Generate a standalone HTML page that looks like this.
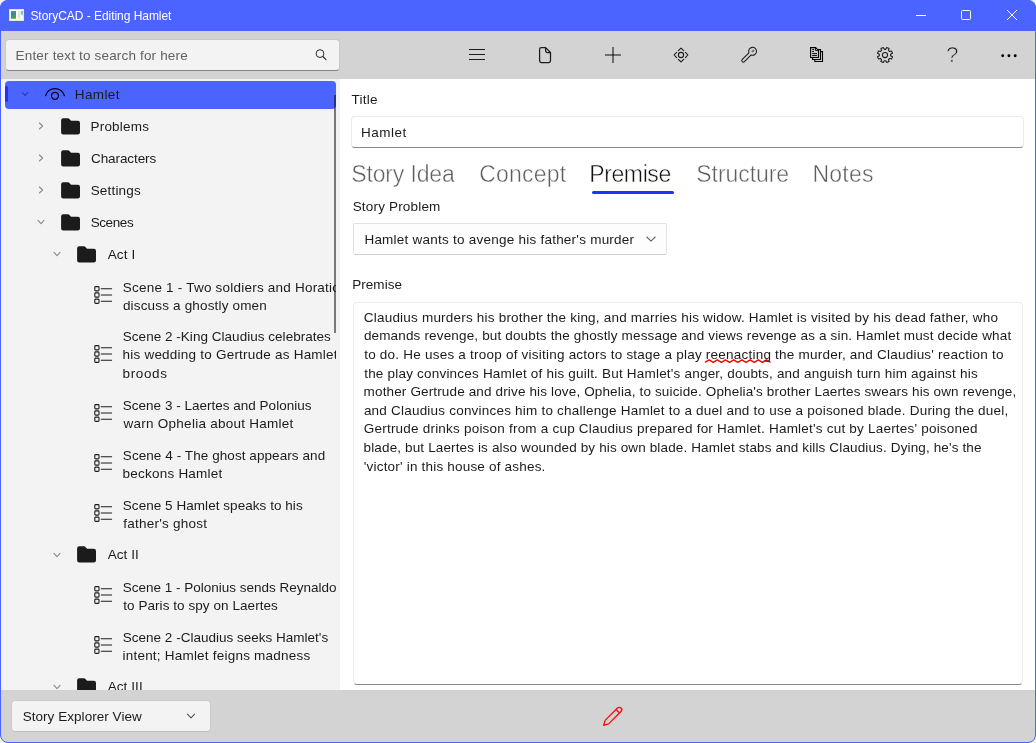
<!DOCTYPE html>
<html lang="en"><head><meta charset="utf-8"><title>StoryCAD - Editing Hamlet</title>
<style>
html,body{margin:0;padding:0}
body{width:1036px;height:743px;overflow:hidden;position:relative;background:#f0f0f0;font-family:"Liberation Sans",sans-serif;}
.a{position:absolute;display:block}
.t{position:absolute;white-space:nowrap;line-height:1;font-family:"Liberation Sans",sans-serif}
.tab{-webkit-text-stroke:0.45px #fff}
.q{-webkit-text-stroke:0.7px #d3d3d3}
#win{position:absolute;left:0;top:0;width:1036px;height:743px;border-radius:8px;overflow:hidden;background:#fff;will-change:transform}
#frame{position:absolute;left:0;top:0;width:1034px;height:741px;border:1px solid #4b64ff;border-radius:8px;pointer-events:none}
#titlebar{left:0;top:0;width:1036px;height:31px;background:#4b64ff}
#toolbar{left:0;top:31px;width:1036px;height:48px;background:#d3d3d3}
#tree{left:0;top:79px;width:340px;height:611px;background:#f3f3f3}
#treeclip{left:0;top:79px;width:336px;height:611px;overflow:hidden}
#treeclip > .in{position:absolute;left:0;top:-79px;width:336px;height:800px}
#bottombar{left:0;top:690px;width:1036px;height:53px;background:#d3d3d3}
.sel{background:#4b64ff;border-radius:4px}
.box{position:absolute;box-sizing:border-box;border-radius:4px}
</style></head><body>
<div id="win">
<div id="titlebar" class="a"></div>
<div id="toolbar" class="a"></div>
<div id="tree" class="a"></div>
<div id="bottombar" class="a"></div>

<!-- title bar -->
<svg class="a" style="left:9px;top:9px" width="16" height="13" viewBox="0 0 16 13"><defs><linearGradient id="g1" x1="0" y1="0" x2="1" y2="1"><stop offset="0" stop-color="#4d7fb0"/><stop offset="0.5" stop-color="#3d8f86"/><stop offset="1" stop-color="#45ad4e"/></linearGradient><linearGradient id="g2" x1="0" y1="0" x2="0" y2="1"><stop offset="0" stop-color="#7f9fcf"/><stop offset="0.75" stop-color="#9fdc90"/><stop offset="1" stop-color="#eef6ea"/></linearGradient></defs><rect x="0" y="0" width="15" height="12" fill="#fbfbf8"/><rect x="0.5" y="0.5" width="14" height="11" fill="none" stroke="#e4e3dc"/><rect x="2" y="2.1" width="5" height="7.6" fill="url(#g1)"/><rect x="8.9" y="2.1" width="2.4" height="7.6" fill="#e2e2e2"/><rect x="11.9" y="2.1" width="2.1" height="4.6" fill="url(#g2)"/></svg>
<div class="a" style="left:916px;top:15px;width:10px;height:1px;background:#fff"></div>
<div class="a" style="left:961px;top:10px;width:8px;height:8px;border:1px solid #fff;border-radius:1.5px"></div>
<svg class="a" style="left:1006px;top:9px" width="12" height="12" viewBox="1006 9 12 12"><path d="M1007.2 10.2 L1016.8 19.8 M1016.8 10.2 L1007.2 19.8" stroke="#fff" stroke-width="1" stroke-linecap="round"/></svg>

<!-- toolbar -->
<div class="box" style="left:5px;top:39px;width:335px;height:32px;background:#f3f3f3;border:1px solid #c8c8c8;border-bottom-color:#868686"></div>
<svg class="a" style="left:313px;top:47px" width="16" height="16" viewBox="313 47 16 16"><circle cx="320" cy="53.6" r="3.9" fill="none" stroke="#2a2a2a" stroke-width="1"/><path d="M322.9 56.5 L326 59.6" stroke="#2a2a2a" stroke-width="1.1" stroke-linecap="round"/></svg>
<div class="a" style="left:469px;top:49px;width:16px;height:1px;background:#1b1b1b;box-shadow:0 5px 0 #1b1b1b,0 10px 0 #1b1b1b"></div><svg class="a" style="left:537px;top:45px" width="16" height="20" viewBox="537 45 16 20"><path fill="none" stroke="#1b1b1b" stroke-width="1.25" stroke-linejoin="round" d="M541.3 47.6 H545.6 L550.5 52.5 V60.8 A1.7 1.7 0 0 1 548.8 62.5 H541.3 A1.7 1.7 0 0 1 539.6 60.8 V49.3 A1.7 1.7 0 0 1 541.3 47.6 Z M545.6 47.6 V50.8 A1.7 1.7 0 0 0 547.3 52.5 H550.5"/></svg><div class="a" style="left:605px;top:54px;width:16px;height:2px;background:rgba(0,0,0,.48)"></div><div class="a" style="left:612px;top:47px;width:2px;height:16px;background:rgba(0,0,0,.48)"></div><svg class="a" style="left:672px;top:46px" width="18" height="18" viewBox="672 46 18 18"><g fill="none" stroke="#1b1b1b" stroke-width="1.1" stroke-linecap="round" stroke-linejoin="round"><circle cx="681" cy="55" r="2.6"/><path d="M678.3 50.6 L681 48.1 L683.7 50.6 M678.3 59.4 L681 61.9 L683.7 59.4 M676.6 52.3 L674.1 55 L676.6 57.7 M685.4 52.3 L687.9 55 L685.4 57.7"/></g></svg><svg class="a" style="left:739px;top:45px" width="20" height="20" viewBox="739 45 20 20"><path d="M751.9 52.0 L753.9 50.0" fill="none" stroke="rgba(0,0,0,.42)" stroke-width="2.2"/><path fill="none" stroke="#1b1b1b" stroke-width="1.05" stroke-linejoin="round" stroke-linecap="round" d="M748.93 52.77 A3.95 3.95 0 1 1 751.13 54.97 L744.45 61.65 A1.55 1.55 0 0 1 742.25 59.45 Z"/></svg><svg class="a" style="left:808px;top:45px" width="18" height="20" viewBox="808 45 18 20"><g fill="none" stroke="#000" stroke-width="1.1" stroke-linejoin="miter"><path d="M810.6 47.6 H815.6 L818.5 50.4 V57.5 H810.6 Z"/><path d="M815.4 47.8 V50.6 H818.4" stroke-width="0.9"/><path d="M812.6 57.6 V59.5 H820.5 V49.6 H818"/><path d="M814.8 59.6 V61.5 H822.5 V51.6 H820.6"/><path d="M812.2 49.6 H814 M812.2 51.6 H814 M812.2 53.6 H817 M812.2 55.6 H817" stroke-width="1"/></g></svg><svg class="a" style="left:875px;top:45px" width="20" height="20" viewBox="875 45 20 20"><g fill="none" stroke="#1b1b1b" stroke-width="1.05" stroke-linejoin="round"><path d="M890.65 55.74 L892.50 56.73 L891.53 59.08 L889.52 58.47 L888.47 59.52 L889.08 61.53 L886.73 62.50 L885.74 60.65 L884.26 60.65 L883.27 62.50 L880.92 61.53 L881.53 59.52 L880.48 58.47 L878.47 59.08 L877.50 56.73 L879.35 55.74 L879.35 54.26 L877.50 53.27 L878.47 50.92 L880.48 51.53 L881.53 50.48 L880.92 48.47 L883.27 47.50 L884.26 49.35 L885.74 49.35 L886.73 47.50 L889.08 48.47 L888.47 50.48 L889.52 51.53 L891.53 50.92 L892.50 53.27 L890.65 54.26 Z"/><circle cx="885" cy="55" r="2.6"/></g></svg><div class="t q" style="left:946.1px;top:43.9px;font-size:22.6px;color:#1b1b1b">?</div><svg class="a" style="left:1000px;top:52px" width="18" height="8" viewBox="1000 52 18 8"><circle cx="1002.7" cy="55.7" r="1.45"/><circle cx="1008.9" cy="55.7" r="1.45"/><circle cx="1015.2" cy="55.7" r="1.45"/></svg>

<!-- tree -->
<div id="treeclip" class="a"><div class="in">
<div class="a sel" style="left:5px;top:81px;width:331px;height:28px"></div><div class="a" style="left:5px;top:86px;width:3px;height:16px;border-radius:2px;background:#1a33ff"></div><svg class="a" style="left:20px;top:89.2px" width="10" height="10" viewBox="-5 -5 10 10"><path fill="none" stroke="#2b3aa6" stroke-width="1.1" stroke-linecap="round" stroke-linejoin="round" d="M-2.7 -1.4 L0 1.4 L2.7 -1.4"/></svg><svg class="a" style="left:44px;top:86px" width="22" height="16" viewBox="44 86 22 16"><path fill="none" stroke="#060816" stroke-width="1.35" stroke-linecap="round" d="M45.6 95.6 A9.8 9.8 0 0 1 64.4 95.6"/><circle cx="55" cy="95.8" r="3.5" fill="none" stroke="#060816" stroke-width="1.35"/></svg><svg class="a" style="left:36px;top:121px" width="10" height="10" viewBox="-5 -5 10 10"><path fill="none" stroke="#8a8a8a" stroke-width="1.1" stroke-linecap="round" stroke-linejoin="round" d="M-1.6 -3 L1.6 0 L-1.6 3"/></svg><svg class="a" style="left:61.4px;top:117.7px" width="20" height="18" viewBox="0 0 20 18"><path fill="#1b1b1b" d="M2.3 0.3 H7 Q7.8 0.3 8.4 0.9 L9.6 2.2 Q10.2 2.8 11 2.8 H16.8 A2.2 2.2 0 0 1 19 5 V14.3 A2.2 2.2 0 0 1 16.8 16.5 H2.3 A2.2 2.2 0 0 1 0.1 14.3 V2.5 A2.2 2.2 0 0 1 2.3 0.3 Z"/></svg><svg class="a" style="left:36px;top:153px" width="10" height="10" viewBox="-5 -5 10 10"><path fill="none" stroke="#8a8a8a" stroke-width="1.1" stroke-linecap="round" stroke-linejoin="round" d="M-1.6 -3 L1.6 0 L-1.6 3"/></svg><svg class="a" style="left:61.4px;top:149.7px" width="20" height="18" viewBox="0 0 20 18"><path fill="#1b1b1b" d="M2.3 0.3 H7 Q7.8 0.3 8.4 0.9 L9.6 2.2 Q10.2 2.8 11 2.8 H16.8 A2.2 2.2 0 0 1 19 5 V14.3 A2.2 2.2 0 0 1 16.8 16.5 H2.3 A2.2 2.2 0 0 1 0.1 14.3 V2.5 A2.2 2.2 0 0 1 2.3 0.3 Z"/></svg><svg class="a" style="left:36px;top:185px" width="10" height="10" viewBox="-5 -5 10 10"><path fill="none" stroke="#8a8a8a" stroke-width="1.1" stroke-linecap="round" stroke-linejoin="round" d="M-1.6 -3 L1.6 0 L-1.6 3"/></svg><svg class="a" style="left:61.4px;top:181.7px" width="20" height="18" viewBox="0 0 20 18"><path fill="#1b1b1b" d="M2.3 0.3 H7 Q7.8 0.3 8.4 0.9 L9.6 2.2 Q10.2 2.8 11 2.8 H16.8 A2.2 2.2 0 0 1 19 5 V14.3 A2.2 2.2 0 0 1 16.8 16.5 H2.3 A2.2 2.2 0 0 1 0.1 14.3 V2.5 A2.2 2.2 0 0 1 2.3 0.3 Z"/></svg><svg class="a" style="left:36px;top:217px" width="10" height="10" viewBox="-5 -5 10 10"><path fill="none" stroke="#8a8a8a" stroke-width="1.1" stroke-linecap="round" stroke-linejoin="round" d="M-3 -1.6 L0 1.6 L3 -1.6"/></svg><svg class="a" style="left:61.4px;top:213.7px" width="20" height="18" viewBox="0 0 20 18"><path fill="#1b1b1b" d="M2.3 0.3 H7 Q7.8 0.3 8.4 0.9 L9.6 2.2 Q10.2 2.8 11 2.8 H16.8 A2.2 2.2 0 0 1 19 5 V14.3 A2.2 2.2 0 0 1 16.8 16.5 H2.3 A2.2 2.2 0 0 1 0.1 14.3 V2.5 A2.2 2.2 0 0 1 2.3 0.3 Z"/></svg><svg class="a" style="left:52px;top:249px" width="10" height="10" viewBox="-5 -5 10 10"><path fill="none" stroke="#8a8a8a" stroke-width="1.1" stroke-linecap="round" stroke-linejoin="round" d="M-3 -1.6 L0 1.6 L3 -1.6"/></svg><svg class="a" style="left:77.4px;top:245.7px" width="20" height="18" viewBox="0 0 20 18"><path fill="#1b1b1b" d="M2.3 0.3 H7 Q7.8 0.3 8.4 0.9 L9.6 2.2 Q10.2 2.8 11 2.8 H16.8 A2.2 2.2 0 0 1 19 5 V14.3 A2.2 2.2 0 0 1 16.8 16.5 H2.3 A2.2 2.2 0 0 1 0.1 14.3 V2.5 A2.2 2.2 0 0 1 2.3 0.3 Z"/></svg><svg class="a" style="left:52px;top:549.6px" width="10" height="10" viewBox="-5 -5 10 10"><path fill="none" stroke="#8a8a8a" stroke-width="1.1" stroke-linecap="round" stroke-linejoin="round" d="M-3 -1.6 L0 1.6 L3 -1.6"/></svg><svg class="a" style="left:77.4px;top:546.3000000000001px" width="20" height="18" viewBox="0 0 20 18"><path fill="#1b1b1b" d="M2.3 0.3 H7 Q7.8 0.3 8.4 0.9 L9.6 2.2 Q10.2 2.8 11 2.8 H16.8 A2.2 2.2 0 0 1 19 5 V14.3 A2.2 2.2 0 0 1 16.8 16.5 H2.3 A2.2 2.2 0 0 1 0.1 14.3 V2.5 A2.2 2.2 0 0 1 2.3 0.3 Z"/></svg><svg class="a" style="left:52px;top:681.6px" width="10" height="10" viewBox="-5 -5 10 10"><path fill="none" stroke="#8a8a8a" stroke-width="1.1" stroke-linecap="round" stroke-linejoin="round" d="M-3 -1.6 L0 1.6 L3 -1.6"/></svg><svg class="a" style="left:77.4px;top:678.3000000000001px" width="20" height="18" viewBox="0 0 20 18"><path fill="#1b1b1b" d="M2.3 0.3 H7 Q7.8 0.3 8.4 0.9 L9.6 2.2 Q10.2 2.8 11 2.8 H16.8 A2.2 2.2 0 0 1 19 5 V14.3 A2.2 2.2 0 0 1 16.8 16.5 H2.3 A2.2 2.2 0 0 1 0.1 14.3 V2.5 A2.2 2.2 0 0 1 2.3 0.3 Z"/></svg><svg class="a" style="left:93px;top:284.50px" width="20" height="20" viewBox="0 0 20 20"><rect x="1.8" y="1.65" width="4.2" height="4.2" rx="0.9" fill="none" stroke="#1b1b1b" stroke-width="1.1"/><path d="M8.2 3.75 H18.6" stroke="#1b1b1b" stroke-width="1.05" stroke-linecap="round"/><rect x="1.8" y="7.90" width="4.2" height="4.2" rx="0.9" fill="none" stroke="#1b1b1b" stroke-width="1.1"/><path d="M8.2 10.00 H18.6" stroke="#1b1b1b" stroke-width="1.05" stroke-linecap="round"/><rect x="1.8" y="14.15" width="4.2" height="4.2" rx="0.9" fill="none" stroke="#1b1b1b" stroke-width="1.1"/><path d="M8.2 16.25 H18.6" stroke="#1b1b1b" stroke-width="1.05" stroke-linecap="round"/></svg><svg class="a" style="left:93px;top:343.80px" width="20" height="20" viewBox="0 0 20 20"><rect x="1.8" y="1.65" width="4.2" height="4.2" rx="0.9" fill="none" stroke="#1b1b1b" stroke-width="1.1"/><path d="M8.2 3.75 H18.6" stroke="#1b1b1b" stroke-width="1.05" stroke-linecap="round"/><rect x="1.8" y="7.90" width="4.2" height="4.2" rx="0.9" fill="none" stroke="#1b1b1b" stroke-width="1.1"/><path d="M8.2 10.00 H18.6" stroke="#1b1b1b" stroke-width="1.05" stroke-linecap="round"/><rect x="1.8" y="14.15" width="4.2" height="4.2" rx="0.9" fill="none" stroke="#1b1b1b" stroke-width="1.1"/><path d="M8.2 16.25 H18.6" stroke="#1b1b1b" stroke-width="1.05" stroke-linecap="round"/></svg><svg class="a" style="left:93px;top:403.10px" width="20" height="20" viewBox="0 0 20 20"><rect x="1.8" y="1.65" width="4.2" height="4.2" rx="0.9" fill="none" stroke="#1b1b1b" stroke-width="1.1"/><path d="M8.2 3.75 H18.6" stroke="#1b1b1b" stroke-width="1.05" stroke-linecap="round"/><rect x="1.8" y="7.90" width="4.2" height="4.2" rx="0.9" fill="none" stroke="#1b1b1b" stroke-width="1.1"/><path d="M8.2 10.00 H18.6" stroke="#1b1b1b" stroke-width="1.05" stroke-linecap="round"/><rect x="1.8" y="14.15" width="4.2" height="4.2" rx="0.9" fill="none" stroke="#1b1b1b" stroke-width="1.1"/><path d="M8.2 16.25 H18.6" stroke="#1b1b1b" stroke-width="1.05" stroke-linecap="round"/></svg><svg class="a" style="left:93px;top:453.10px" width="20" height="20" viewBox="0 0 20 20"><rect x="1.8" y="1.65" width="4.2" height="4.2" rx="0.9" fill="none" stroke="#1b1b1b" stroke-width="1.1"/><path d="M8.2 3.75 H18.6" stroke="#1b1b1b" stroke-width="1.05" stroke-linecap="round"/><rect x="1.8" y="7.90" width="4.2" height="4.2" rx="0.9" fill="none" stroke="#1b1b1b" stroke-width="1.1"/><path d="M8.2 10.00 H18.6" stroke="#1b1b1b" stroke-width="1.05" stroke-linecap="round"/><rect x="1.8" y="14.15" width="4.2" height="4.2" rx="0.9" fill="none" stroke="#1b1b1b" stroke-width="1.1"/><path d="M8.2 16.25 H18.6" stroke="#1b1b1b" stroke-width="1.05" stroke-linecap="round"/></svg><svg class="a" style="left:93px;top:503.10px" width="20" height="20" viewBox="0 0 20 20"><rect x="1.8" y="1.65" width="4.2" height="4.2" rx="0.9" fill="none" stroke="#1b1b1b" stroke-width="1.1"/><path d="M8.2 3.75 H18.6" stroke="#1b1b1b" stroke-width="1.05" stroke-linecap="round"/><rect x="1.8" y="7.90" width="4.2" height="4.2" rx="0.9" fill="none" stroke="#1b1b1b" stroke-width="1.1"/><path d="M8.2 10.00 H18.6" stroke="#1b1b1b" stroke-width="1.05" stroke-linecap="round"/><rect x="1.8" y="14.15" width="4.2" height="4.2" rx="0.9" fill="none" stroke="#1b1b1b" stroke-width="1.1"/><path d="M8.2 16.25 H18.6" stroke="#1b1b1b" stroke-width="1.05" stroke-linecap="round"/></svg><svg class="a" style="left:93px;top:585.10px" width="20" height="20" viewBox="0 0 20 20"><rect x="1.8" y="1.65" width="4.2" height="4.2" rx="0.9" fill="none" stroke="#1b1b1b" stroke-width="1.1"/><path d="M8.2 3.75 H18.6" stroke="#1b1b1b" stroke-width="1.05" stroke-linecap="round"/><rect x="1.8" y="7.90" width="4.2" height="4.2" rx="0.9" fill="none" stroke="#1b1b1b" stroke-width="1.1"/><path d="M8.2 10.00 H18.6" stroke="#1b1b1b" stroke-width="1.05" stroke-linecap="round"/><rect x="1.8" y="14.15" width="4.2" height="4.2" rx="0.9" fill="none" stroke="#1b1b1b" stroke-width="1.1"/><path d="M8.2 16.25 H18.6" stroke="#1b1b1b" stroke-width="1.05" stroke-linecap="round"/></svg><svg class="a" style="left:93px;top:635.10px" width="20" height="20" viewBox="0 0 20 20"><rect x="1.8" y="1.65" width="4.2" height="4.2" rx="0.9" fill="none" stroke="#1b1b1b" stroke-width="1.1"/><path d="M8.2 3.75 H18.6" stroke="#1b1b1b" stroke-width="1.05" stroke-linecap="round"/><rect x="1.8" y="7.90" width="4.2" height="4.2" rx="0.9" fill="none" stroke="#1b1b1b" stroke-width="1.1"/><path d="M8.2 10.00 H18.6" stroke="#1b1b1b" stroke-width="1.05" stroke-linecap="round"/><rect x="1.8" y="14.15" width="4.2" height="4.2" rx="0.9" fill="none" stroke="#1b1b1b" stroke-width="1.1"/><path d="M8.2 16.25 H18.6" stroke="#1b1b1b" stroke-width="1.05" stroke-linecap="round"/></svg><div class="t" style="left:74.80px;top:87px;line-height:15px;font-size:13.5px;letter-spacing:0.378px;color:#1b1b1b">Hamlet</div><div class="t" style="left:90.50px;top:119px;line-height:15px;font-size:13.5px;letter-spacing:0.204px;color:#1b1b1b">Problems</div><div class="t" style="left:91.00px;top:151px;line-height:15px;font-size:13.5px;letter-spacing:-0.086px;color:#1b1b1b">Characters</div><div class="t" style="left:90.70px;top:183px;line-height:15px;font-size:13.5px;letter-spacing:0.182px;color:#1b1b1b">Settings</div><div class="t" style="left:90.70px;top:215px;line-height:15px;font-size:13.5px;letter-spacing:-0.416px;color:#1b1b1b">Scenes</div><div class="t" style="left:107.70px;top:247px;line-height:15px;font-size:13.5px;letter-spacing:0.161px;color:#1b1b1b">Act I</div><div class="t" style="left:122.80px;top:280px;line-height:15px;font-size:13.5px;letter-spacing:0.215px;color:#1b1b1b">Scene 1 - Two soldiers and Horatio</div><div class="t" style="left:122.90px;top:298px;line-height:15px;font-size:13.5px;letter-spacing:0.171px;color:#1b1b1b">discuss a ghostly omen</div><div class="t" style="left:122.80px;top:329px;line-height:15px;font-size:13.5px;letter-spacing:0.029px;color:#1b1b1b">Scene 2 -King Claudius celebrates</div><div class="t" style="left:122.50px;top:347px;line-height:15px;font-size:13.5px;letter-spacing:0.225px;color:#1b1b1b">his wedding to Gertrude as Hamlet</div><div class="t" style="left:122.60px;top:366px;line-height:15px;font-size:13.5px;letter-spacing:0.614px;color:#1b1b1b">broods</div><div class="t" style="left:122.80px;top:398px;line-height:15px;font-size:13.5px;letter-spacing:0.010px;color:#1b1b1b">Scene 3 - Laertes and Polonius</div><div class="t" style="left:123.50px;top:416px;line-height:15px;font-size:13.5px;letter-spacing:0.261px;color:#1b1b1b">warn Ophelia about Hamlet</div><div class="t" style="left:122.80px;top:448px;line-height:15px;font-size:13.5px;letter-spacing:0.074px;color:#1b1b1b">Scene 4 - The ghost appears and</div><div class="t" style="left:122.60px;top:466px;line-height:15px;font-size:13.5px;letter-spacing:0.220px;color:#1b1b1b">beckons Hamlet</div><div class="t" style="left:122.80px;top:498px;line-height:15px;font-size:13.5px;letter-spacing:0.047px;color:#1b1b1b">Scene 5 Hamlet speaks to his</div><div class="t" style="left:123.30px;top:516px;line-height:15px;font-size:13.5px;letter-spacing:0.233px;color:#1b1b1b">father's ghost</div><div class="t" style="left:107.70px;top:547px;line-height:15px;font-size:13.5px;letter-spacing:0.059px;color:#1b1b1b">Act II</div><div class="t" style="left:122.80px;top:580px;line-height:15px;font-size:13.5px;letter-spacing:-0.009px;color:#1b1b1b">Scene 1 - Polonius sends Reynaldo</div><div class="t" style="left:123.20px;top:598px;line-height:15px;font-size:13.5px;letter-spacing:0.063px;color:#1b1b1b">to Paris to spy on Laertes</div><div class="t" style="left:122.80px;top:630px;line-height:15px;font-size:13.5px;letter-spacing:0.006px;color:#1b1b1b">Scene 2 -Claudius seeks Hamlet's</div><div class="t" style="left:122.50px;top:648px;line-height:15px;font-size:13.5px;letter-spacing:0.216px;color:#1b1b1b">intent; Hamlet feigns madness</div><div class="t" style="left:107.70px;top:679px;line-height:15px;font-size:13.5px;letter-spacing:0.074px;color:#1b1b1b">Act III</div>
</div></div>
<div class="a" style="left:334px;top:95px;width:2px;height:238px;background:rgba(0,0,0,.5)"></div>

<!-- right pane -->
<div class="box" style="left:351px;top:116px;width:673px;height:32px;background:#fff;border:1px solid #ececec;border-bottom-color:#8a8a8a"></div>
<div class="a" style="left:592px;top:190.6px;width:82px;height:3.2px;border-radius:2px;background:#1a33ff"></div>
<div class="box" style="left:353px;top:223px;width:314px;height:32px;background:#fdfdfd;border:1px solid #e3e3e3;border-bottom-color:#d0d0d0;border-radius:2px"></div>
<svg class="a" style="left:646px;top:234px" width="10" height="10" viewBox="-5 -5 10 10"><path fill="none" stroke="#676767" stroke-width="1.1" stroke-linecap="round" stroke-linejoin="round" d="M-4.2 -2 L0 2.1 L4.2 -2"/></svg>
<div class="box" style="left:353px;top:302px;width:670px;height:383px;background:#fff;border:1px solid #ececec;border-bottom-color:#8a8a8a"></div>
<svg class="a" style="left:700px;top:356px" width="76" height="10" viewBox="700 356 76 10"><path d="M705 362.3 L709.1 359.8 L713.2 362.3 L717.3 359.8 L721.4 362.3 L725.5 359.8 L729.6 362.3 L733.7 359.8 L737.8 362.3 L741.9 359.8 L746.0 362.3 L750.1 359.8 L754.2 362.3 L758.3 359.8 L762.4 362.3 L766.5 359.8 L770.5 362.3" fill="none" stroke="#ff0000" stroke-width="1.4" stroke-linejoin="round"/></svg>

<!-- bottom bar -->
<div class="box" style="left:11px;top:700px;width:200px;height:32px;background:#f3f3f3;border:1px solid #cacaca;border-bottom-color:#bdbdbd"></div>
<svg class="a" style="left:186.2px;top:711px" width="10" height="10" viewBox="-5 -5 10 10"><path fill="none" stroke="#555555" stroke-width="1.1" stroke-linecap="round" stroke-linejoin="round" d="M-3.6 -1.8 L0 1.8 L3.6 -1.8"/></svg>
<svg class="a" style="left:600px;top:703px" width="26" height="26" viewBox="600 703 26 26"><g fill="none" stroke="#ff0808" stroke-width="1.3" stroke-linejoin="round"><path d="M603.6 725.4 L605.1 720.4 L617.5 708.0 A2.35 2.35 0 0 1 621.0 711.5 L608.6 723.9 Z"/><path d="M616.0 709.5 L619.5 713.0"/></g></svg>

<div class="t" style="left:30.40px;top:9px;line-height:14px;font-size:12px;letter-spacing:-0.042px;color:#ffffff">StoryCAD - Editing Hamlet</div><div class="t" style="left:15.60px;top:48px;line-height:15px;font-size:13.5px;letter-spacing:0.171px;color:#616161">Enter text to search for here</div><div class="t" style="left:22.70px;top:709px;line-height:15px;font-size:13.5px;letter-spacing:0.042px;color:#1b1b1b">Story Explorer View</div><div class="t" style="left:351.50px;top:92px;line-height:15px;font-size:13.5px;letter-spacing:0.226px;color:#1b1b1b">Title</div><div class="t" style="left:361.10px;top:125px;line-height:15px;font-size:13.5px;letter-spacing:0.478px;color:#1b1b1b">Hamlet</div><div class="t tab" style="left:351.20px;top:161px;line-height:26px;font-size:23px;letter-spacing:-0.138px;color:#5e5e5e">Story Idea</div><div class="t tab" style="left:479.30px;top:161px;line-height:26px;font-size:23px;letter-spacing:0.204px;color:#5e5e5e">Concept</div><div class="t tab" style="left:589.20px;top:161px;line-height:26px;font-size:23px;letter-spacing:-0.377px;color:#111111">Premise</div><div class="t tab" style="left:696.30px;top:161px;line-height:26px;font-size:23px;letter-spacing:-0.065px;color:#5e5e5e">Structure</div><div class="t tab" style="left:812.50px;top:161px;line-height:26px;font-size:23px;letter-spacing:0.229px;color:#5e5e5e">Notes</div><div class="t" style="left:352.70px;top:199px;line-height:15px;font-size:13.5px;letter-spacing:0.176px;color:#1b1b1b">Story Problem</div><div class="t" style="left:364.40px;top:232px;line-height:15px;font-size:13.5px;letter-spacing:0.238px;color:#1b1b1b">Hamlet wants to avenge his father's murder</div><div class="t" style="left:352.20px;top:277px;line-height:15px;font-size:13.5px;letter-spacing:0.050px;color:#1b1b1b">Premise</div><div class="t" style="left:363.80px;top:310px;line-height:15px;font-size:13.5px;letter-spacing:0.207px;color:#1b1b1b">Claudius murders his brother the king, and marries his widow. Hamlet is visited by his dead father, who</div><div class="t" style="left:363.90px;top:328px;line-height:15px;font-size:13.5px;letter-spacing:0.157px;color:#1b1b1b">demands revenge, but doubts the ghostly message and views revenge as a sin. Hamlet must decide what</div><div class="t" style="left:364.20px;top:347px;line-height:15px;font-size:13.5px;letter-spacing:0.224px;color:#1b1b1b">to do. He uses a troop of visiting actors to stage a play reenacting the murder, and Claudius' reaction to</div><div class="t" style="left:364.20px;top:366px;line-height:15px;font-size:13.5px;letter-spacing:0.205px;color:#1b1b1b">the play convinces Hamlet of his guilt. But Hamlet's anger, doubts, and anguish turn him against his</div><div class="t" style="left:363.60px;top:384px;line-height:15px;font-size:13.5px;letter-spacing:0.145px;color:#1b1b1b">mother Gertrude and drive his love, Ophelia, to suicide. Ophelia's brother Laertes swears his own revenge,</div><div class="t" style="left:363.90px;top:403px;line-height:15px;font-size:13.5px;letter-spacing:0.212px;color:#1b1b1b">and Claudius convinces him to challenge Hamlet to a duel and to use a poisoned blade. During the duel,</div><div class="t" style="left:363.80px;top:421px;line-height:15px;font-size:13.5px;letter-spacing:0.211px;color:#1b1b1b">Gertrude drinks poison from a cup Claudius prepared for Hamlet. Hamlet's cut by Laertes' poisoned</div><div class="t" style="left:363.60px;top:440px;line-height:15px;font-size:13.5px;letter-spacing:0.135px;color:#1b1b1b">blade, but Laertes is also wounded by his own blade. Hamlet stabs and kills Claudius. Dying, he's the</div><div class="t" style="left:363.80px;top:459px;line-height:15px;font-size:13.5px;letter-spacing:0.195px;color:#1b1b1b">'victor' in this house of ashes.</div>
</div>
<div id="frame"></div>
</body></html>
